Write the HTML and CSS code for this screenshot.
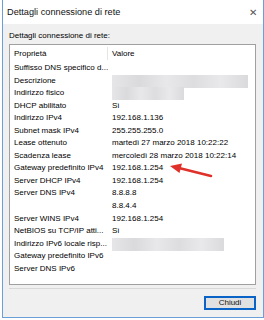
FILE: index.html
```html
<!DOCTYPE html>
<html lang="it">
<head>
    <meta charset="UTF-8">
    <title>Dettagli connessione di rete</title>
    <link rel="stylesheet" href="styles.css">
</head>
<body>
    <div class="window">
        <div class="titlebar">
            <span class="title">Dettagli connessione di rete</span>
            <span class="close">&#x2715;</span>
        </div>

        <div class="content">
            <div class="caption">Dettagli connessione di rete:</div>

            <div class="listbox">
                <div class="list-head">
                    <div class="col-prop">Proprietà</div>
                    <div class="col-val">Valore</div>
                </div>
                <div class="rows">
                    <div class="row"><div class="col-prop">Suffisso DNS specifico d...</div><div class="col-val"></div></div>
                    <div class="row"><div class="col-prop">Descrizione</div><div class="col-val"><span class="blur blur-long"></span></div></div>
                    <div class="row"><div class="col-prop">Indirizzo fisico</div><div class="col-val"><span class="blur blur-short"></span></div></div>
                    <div class="row"><div class="col-prop">DHCP abilitato</div><div class="col-val">Sì</div></div>
                    <div class="row"><div class="col-prop">Indirizzo IPv4</div><div class="col-val">192.168.1.136</div></div>
                    <div class="row"><div class="col-prop">Subnet mask IPv4</div><div class="col-val">255.255.255.0</div></div>
                    <div class="row"><div class="col-prop">Lease ottenuto</div><div class="col-val">martedì 27 marzo 2018 10:22:22</div></div>
                    <div class="row"><div class="col-prop">Scadenza lease</div><div class="col-val">mercoledì 28 marzo 2018 10:22:14</div></div>
                    <div class="row"><div class="col-prop">Gateway predefinito IPv4</div><div class="col-val">192.168.1.254</div></div>
                    <div class="row"><div class="col-prop">Server DHCP IPv4</div><div class="col-val">192.168.1.254</div></div>
                    <div class="row"><div class="col-prop">Server DNS IPv4</div><div class="col-val">8.8.8.8</div></div>
                    <div class="row"><div class="col-prop"></div><div class="col-val">8.8.4.4</div></div>
                    <div class="row"><div class="col-prop">Server WINS IPv4</div><div class="col-val">192.168.1.254</div></div>
                    <div class="row"><div class="col-prop">NetBIOS su TCP/IP atti...</div><div class="col-val">Sì</div></div>
                    <div class="row"><div class="col-prop">Indirizzo IPv6 locale risp...</div><div class="col-val"><span class="blur blur-mid"></span></div></div>
                    <div class="row"><div class="col-prop">Gateway predefinito IPv6</div><div class="col-val"></div></div>
                    <div class="row"><div class="col-prop">Server DNS IPv6</div><div class="col-val"></div></div>
                </div>

                <!-- red arrow annotation pointing at the gateway -->
                <svg class="arrow" width="50" height="20" viewBox="0 0 50 20">
                    <path d="M42 13 L10 5" stroke="#e0302a" stroke-width="2.6" stroke-linecap="round" fill="none"/>
                    <path d="M1 3 L13 0.5 L10.5 10 Z" fill="#e0302a"/>
                </svg>
            </div>

            <div class="separator"></div>

            <div class="footer">
                <button class="btn">Chiudi</button>
            </div>
        </div>
    </div>
</body>
</html>
```

FILE: styles.css
```css
* {
    margin: 0;
    padding: 0;
    box-sizing: border-box;
}

body {
    background: #ffffff;
    font-family: 'Liberation Sans', Arial, sans-serif;
    font-size: 8px;
    color: #000000;
}

.window {
    width: 262px;
    height: 318px;
    margin-left: 2px;
    background: #f0f0f0;
    border: 1px solid #6a9fd8;
    border-top: none;
    display: flex;
    flex-direction: column;
}

.titlebar {
    height: 24px;
    background: #ffffff;
    display: flex;
    align-items: center;
    justify-content: space-between;
    padding: 0 6px 0 4px;
}

.title {
    font-size: 9.2px;
    color: #111;
}

.close {
    font-size: 10px;
    color: #555;
}

.content {
    flex: 1;
    display: flex;
    flex-direction: column;
    padding: 6px 7px 0 6px;
}

.caption {
    height: 14px;
    line-height: 12px;
}

.listbox {
    position: relative;
    height: 241px;
    background: #ffffff;
    border: 1px solid #a0a0a0;
}

.list-head {
    display: flex;
    height: 16px;
    align-items: center;
}

.list-head .col-prop {
    border-right: 1px solid #e5e5e5;
    height: 13px;
    line-height: 13px;
}

.col-prop {
    width: 98px;
    padding-left: 4px;
    white-space: nowrap;
    overflow: hidden;
}

.col-val {
    padding-left: 4px;
    white-space: nowrap;
    flex: 1;
}

.rows {
    padding-top: 1px;
}

.row {
    display: flex;
    height: 12.56px;
    line-height: 12.56px;
}

.blur {
    display: inline-block;
    vertical-align: middle;
    height: 13px;
    background: linear-gradient(90deg, #e6e6e8 0%, #dadadd 20%, #e8e8ea 40%, #dddde0 60%, #e9e9eb 80%, #dadadd 100%);
}

.blur-long {
    width: 136px;
}

.blur-short {
    width: 72px;
}

.blur-mid {
    width: 112px;
}

.arrow {
    position: absolute;
    left: 159px;
    top: 118px;
}

.separator {
    margin-top: 3px;
    height: 1px;
    background: #d8d8d8;
}

.footer {
    display: flex;
    justify-content: flex-end;
    padding-top: 7px;
}

.btn {
    width: 52px;
    height: 14px;
    background: #e1e1e1;
    border: 2px solid #0a64c8;
    font-family: 'Liberation Sans', Arial, sans-serif;
    font-size: 8px;
    color: #111;
    line-height: 10px;
}
```
